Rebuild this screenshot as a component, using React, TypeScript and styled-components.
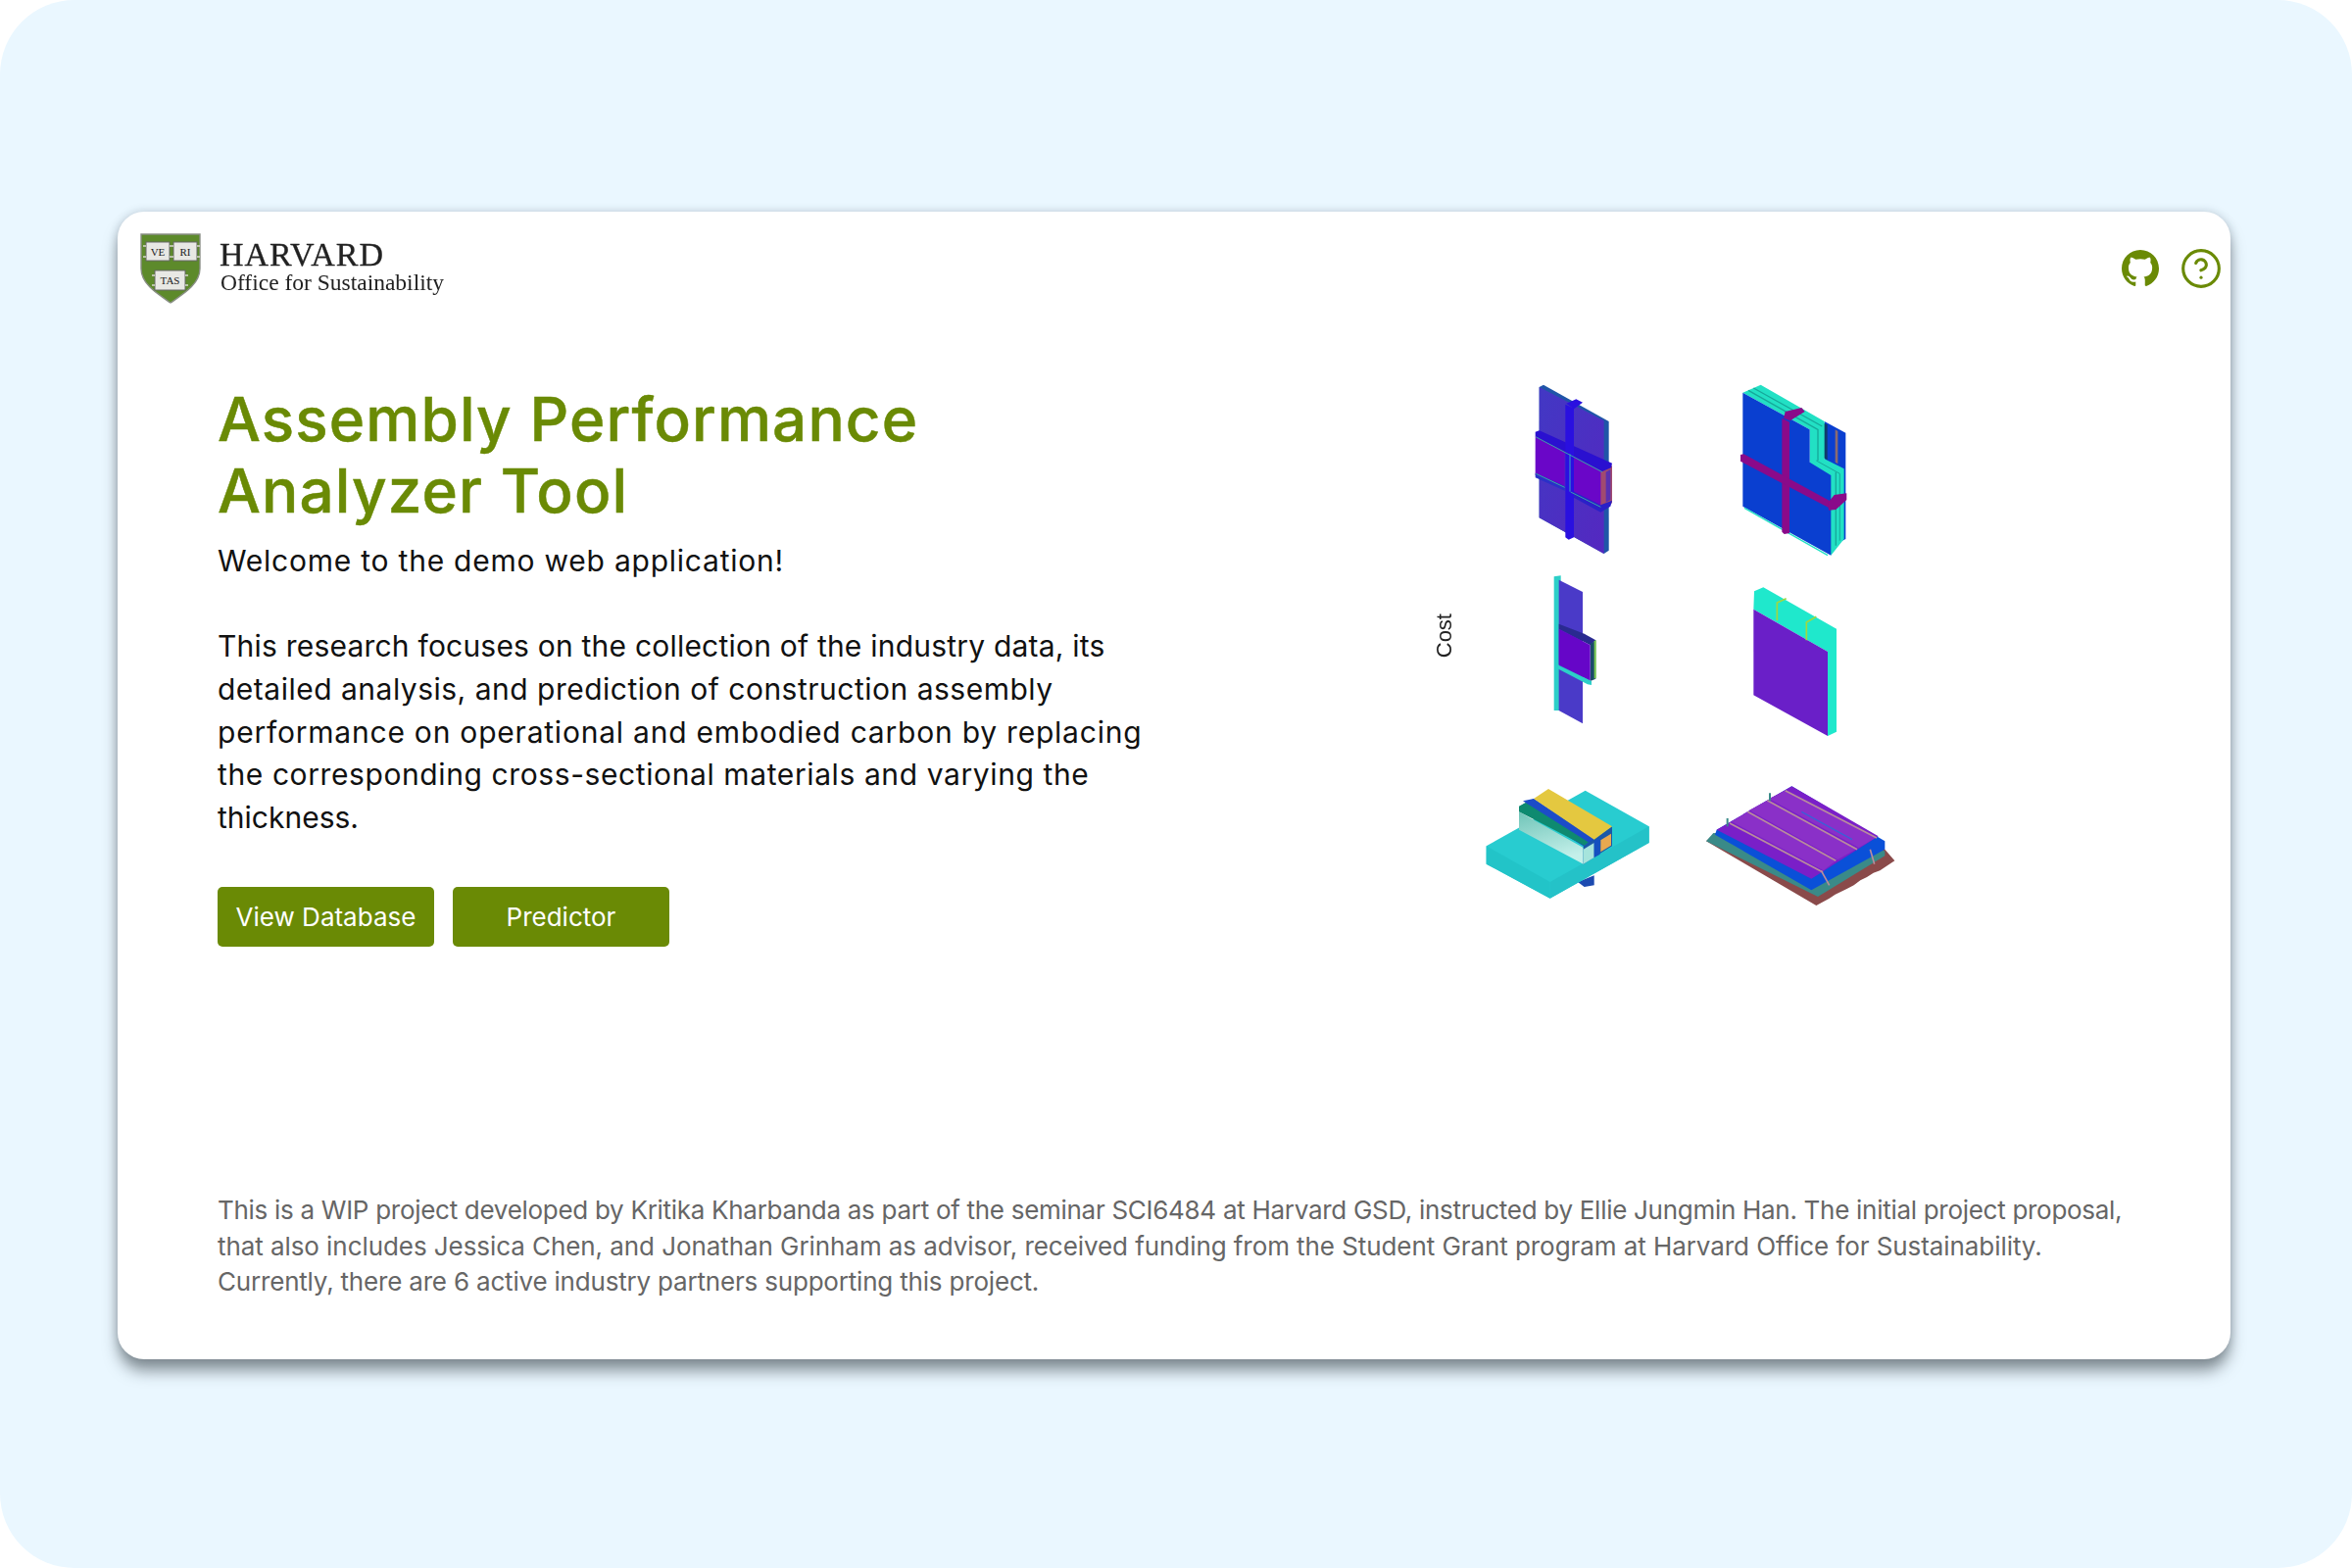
import React from "react";
import styled, { createGlobalStyle } from "styled-components";
import { BsGithub } from "react-icons/bs";
import { CircleHelp } from "lucide-react";

const Global = createGlobalStyle`
  html, body { margin: 0; padding: 0; background: #fff; }
  body { font-family: Inter, "Noto Sans", sans-serif; }
`;

const Page = styled.div`
  width: 2400px; height: 1600px; box-sizing: border-box;
  background: #eaf7ff; border-radius: 76px;
  padding: 216px 124px 213px 120px;
  display: flex;
`;
const Card = styled.main`
  flex: 1; background: #fff; border-radius: 27px;
  box-shadow: 0 13px 15px -1px rgba(40, 50, 55, 0.5), 0 0 10px rgba(40, 60, 75, 0.22);
  display: flex; flex-direction: column;
`;
const Header = styled.header`
  display: flex; justify-content: space-between; align-items: center;
  padding: 22px 8px 0 23px;
`;
const Brand = styled.div`
  display: flex; align-items: center; gap: 19px;
`;
const BrandText = styled.div`
  font-family: "Liberation Serif", serif; color: #222; display: flex; flex-direction: column;
  filter: blur(0.3px); padding-bottom: 2px;
`;
const BrandName = styled.span`
  font-size: 34px; line-height: 30px; letter-spacing: 1px; -webkit-text-stroke: 0.3px #222;
`;
const BrandSub = styled.span`
  font-size: 23.5px; line-height: 27px; padding-left: 1px;
`;
const IconRow = styled.div`
  display: flex; gap: 21px; align-items: center; color: #6a8a05;
`;
const Main = styled.section`
  display: grid; grid-template-columns: 1228px 1fr;
  padding-left: 102px; margin-top: 60px;
`;
const Intro = styled.div`
  padding-top: 21px; display: flex; flex-direction: column; align-items: flex-start;
`;
const Title = styled.h1`
  margin: 0; font-size: 62px; line-height: 73px; font-weight: 500; color: #6a8a05; letter-spacing: 1.1px;
  -webkit-text-stroke: 0.5px #6a8a05;
`;
const Welcome = styled.p`
  margin: 13px 0 0; font-size: 30px; line-height: 44px; color: #111; letter-spacing: 0.77px;
`;
const Body = styled.div`
  margin: 44px 0 0; font-size: 30px; line-height: 43.8px; color: #111;
`;
const Line = styled.span<{ $track: number }>`
  display: block; white-space: nowrap; letter-spacing: ${(p) => p.$track}px;
`;
const Actions = styled.div`
  display: flex; gap: 19px; margin-top: 48px;
`;
const Action = styled.button`
  width: 221px; height: 61px; border: 0; border-radius: 5px; background: #6a8a05;
  color: #fff; font: 400 26px Inter, sans-serif; padding: 0;
`;
const Figure = styled.figure`
  margin: 0; display: flex; align-items: flex-start;
`;
const CostLabel = styled.span`
  font: 400 22px "Liberation Sans", Arial, sans-serif; color: #222;
  writing-mode: vertical-rl; transform: rotate(180deg);
  width: 26px; margin: 256px 13px 0 11px; display: block; text-align: center;
`;
const Art = styled.svg`
  display: block; filter: blur(0.6px);
`;
const Footnote = styled.div`
  margin: auto 0 0; padding: 0 40px 60px 102px; font-size: 26px; line-height: 36.7px; color: #666;
`;

const Shield = () => (
  <svg width="62" height="72" viewBox="0 0 62 72" aria-hidden="true">
    <path d="M1 1H61V36C61 52 44 62 31 71C18 62 1 52 1 36Z" fill="#5d8a2b" stroke="#8a8f86" strokeWidth="1.4" />
    <g fill="#e8e8e4" stroke="#666" strokeWidth="1">
      <rect x="6" y="9" width="24" height="19" />
      <rect x="34" y="9" width="24" height="19" />
      <rect x="15" y="38" width="31" height="20" />
    </g>
    <g fill="none" stroke="#d8d8d0" strokeWidth="1.6">
      <path d="M3 13h3M3 24h3M30 13h4M30 24h4M58 13h3M58 24h3M12 43h3M12 53h3M46 43h3M46 53h3" />
    </g>
    <g fontFamily="Liberation Serif, serif" fontSize="11" fill="#222" textAnchor="middle">
      <text x="18" y="22.5">VE</text>
      <text x="46" y="22.5">RI</text>
      <text x="30.5" y="52">TAS</text>
    </g>
  </svg>
);

const Assemblies = () => (
  <Art width="450" height="600" viewBox="150 0 1350 1800" aria-hidden="true">
    <defs>
      <linearGradient id="wallA" x1="0" y1="0" x2="1" y2="1">
        <stop offset="0" stopColor="#4238c4" />
        <stop offset="1" stopColor="#5428c0" />
      </linearGradient>
      <linearGradient id="boxFace" x1="0" y1="0" x2="0.3" y2="1">
        <stop offset="0" stopColor="#6fc4b8" />
        <stop offset="1" stopColor="#c4f0ea" />
      </linearGradient>
    </defs>

    {/* curtain wall, top left */}
    <polygon points="375,68 575,180 575,575 560,585 362,475 362,75" fill="#1f55a8" />
    <polygon points="362,75 560,178 560,585 362,475" fill="url(#wallA)" />
    <polygon points="350,225 440,270 440,385 350,345" fill="#6a06c8" />
    <polygon points="458,282 555,332 555,445 458,395" fill="#6a06c8" />
    <polygon points="550,335 585,315 585,430 550,450" fill="#a04a70" />
    <polygon points="566,335 580,327 580,420 566,428" fill="#5a30b0" />
    <polygon points="350,212 362,208 585,308 582,322 555,333 350,226" fill="#2a10d0" />
    <polygon points="350,338 440,378 440,392 350,352" fill="#2a30c8" />
    <polygon points="458,390 550,436 585,422 580,440 550,458 458,408" fill="#2a20c8" />
    <polygon points="442,128 468,140 468,535 452,542 442,535" fill="#2a10e0" />
    <polygon points="445,125 475,112 495,122 468,142" fill="#2a10e0" />
    <polyline points="352,228 555,335" fill="none" stroke="#3aa0a8" strokeWidth="3" />
    <polyline points="352,340 440,382" fill="none" stroke="#3aa0a8" strokeWidth="3" />
    <polyline points="458,396 550,442" fill="none" stroke="#3aa0a8" strokeWidth="3" />
    <line x1="456" y1="280" x2="456" y2="395" stroke="#3aa0c8" strokeWidth="3" />

    {/* stepped wall, top right */}
    <polygon points="1235,180 1300,215 1300,540 1270,555 1270,330 1235,295" fill="#0a3fd0" />
    <polygon points="1232,185 1244,190 1244,298 1232,292" fill="#0f3a6a" />
    <polygon points="1268,205 1276,210 1276,310 1268,305" fill="#8a6a70" />
    <polygon points="985,92 1040,68 1235,180 1235,295 1295,325 1295,540 1255,590 1190,305 1190,205" fill="#22e0c4" />
    <polyline points="1002,85 1215,205 1215,300" fill="none" stroke="#16a89a" strokeWidth="4" />
    <polyline points="1018,78 1228,195" fill="none" stroke="#16a89a" strokeWidth="4" />
    <polyline points="1270,335 1270,560" fill="none" stroke="#16a89a" strokeWidth="4" />
    <polyline points="1210,300 1282,340 1282,545" fill="none" stroke="#16a89a" strokeWidth="3" />
    <polygon points="985,92 1190,205 1190,305 1255,345 1255,590 985,440" fill="#0a3fd0" />
    <polyline points="990,445 1245,590" fill="none" stroke="#22e0c4" strokeWidth="4" />
    <polygon points="1105,170 1128,182 1128,522 1112,525 1105,518" fill="#8a0a8a" />
    <polygon points="1115,150 1165,138 1175,150 1130,178 1110,170" fill="#8a0a8a" />
    <polygon points="978,282 988,280 1255,425 1255,448 978,302" fill="#8a0a8a" />
    <polygon points="1245,430 1265,405 1303,400 1303,420 1270,450 1248,452" fill="#8a0a8a" />

    {/* narrow mullion, middle left */}
    <polygon points="407,655 428,652 430,1065 407,1065" fill="#2ccfc8" />
    <polygon points="422,665 495,702 495,1105 422,1065" fill="#4a3ac8" />
    <polygon points="422,800 500,830 535,850 518,865 422,815" fill="#2a2a90" />
    <polygon points="518,862 535,850 535,968 518,975" fill="#1a4a6a" />
    <polygon points="530,852 536,850 536,965 530,968" fill="#7acb50" />
    <polygon points="422,815 518,865 518,975 422,925" fill="#6606c8" />
    <polygon points="418,925 522,975 522,987 510,985 418,937" fill="#2ccfc8" />

    {/* insulated panel, middle right */}
    <polygon points="1020,700 1048,688 1272,815 1272,1130 1245,1143 1245,885 1018,755" fill="#1fe8cc" />
    <polygon points="1018,755 1245,885 1245,1143 1018,1018" fill="#6a1fc8" />
    <polyline points="1118,722 1090,735 1090,790" fill="none" stroke="#a0d840" strokeWidth="5" />
    <polyline points="1210,778 1180,795 1180,850" fill="none" stroke="#a0d840" strokeWidth="5" />

    {/* parapet on slab, bottom left */}
    <polygon points="480,1590 530,1570 530,1600 500,1605" fill="#1c4ab0" />
    <polygon points="200,1480 503,1310 698,1420 698,1470 395,1640 200,1535" fill="#28ccd0" />
    <polygon points="200,1480 395,1590 395,1640 200,1535" fill="#22c4c8" />
    <polygon points="395,1590 698,1420 698,1470 395,1640" fill="#24c2c8" />
    <polygon points="300,1375 497,1485 497,1535 300,1430" fill="url(#boxFace)" />
    <polygon points="497,1480 585,1420 585,1480 497,1535" fill="#1a58a8" />
    <polygon points="550,1462 582,1442 582,1478 550,1498" fill="#e8a850" />
    <polygon points="497,1490 530,1470 530,1515 497,1535" fill="#a6e4dc" />
    <polygon points="530,1465 548,1455 548,1505 530,1515" fill="#1450c0" />
    <polygon points="300,1360 345,1335 530,1460 497,1480" fill="#1450c0" />
    <polygon points="300,1358 320,1347 525,1458 500,1478 300,1375" fill="#0e8a70" />
    <polygon points="312,1342 345,1335 530,1458 512,1468" fill="#1c4cc8" />
    <polygon points="345,1335 390,1305 585,1420 530,1460" fill="#e4c840" />

    {/* standing-seam roof, bottom right */}
    <path d="M873 1465 L1210 1662 L1250 1640 L1268 1628 L1285 1620 L1305 1610 L1325 1600 L1345 1585 L1365 1575 L1385 1562 L1405 1555 L1450 1525 L1420 1490 L900 1440Z" fill="#8a4a4a" />
    <polygon points="873,1465 895,1440 1420,1495 1420,1510 1215,1635" fill="#3a8a88" />
    <polygon points="905,1430 1135,1297 1420,1465 1420,1490 1195,1615 900,1445" fill="#0a50d8" />
    <polygon points="905,1430 1135,1297 1400,1450 1195,1580" fill="#7a1fc8" />
    <polygon points="950,1405 1000,1375 1270,1525 1232,1555" fill="#8a30c8" />
    <polygon points="1005,1370 1060,1340 1335,1488 1275,1522" fill="#8a30c8" />
    <polygon points="1065,1335 1115,1310 1395,1453 1340,1485" fill="#8a30c8" />
    <g stroke="#b98c9c" strokeWidth="5">
      <line x1="945" y1="1410" x2="1230" y2="1560" />
      <line x1="1000" y1="1375" x2="1270" y2="1525" />
      <line x1="1060" y1="1340" x2="1335" y2="1490" />
      <line x1="1115" y1="1310" x2="1395" y2="1455" />
    </g>
    <g stroke="#3a8a88" strokeWidth="6">
      <line x1="938" y1="1395" x2="938" y2="1420" />
      <line x1="1068" y1="1318" x2="1068" y2="1342" />
    </g>
    <g stroke="#b98c9c" strokeWidth="5">
      <line x1="1225" y1="1555" x2="1250" y2="1600" />
      <line x1="1375" y1="1490" x2="1388" y2="1535" />
    </g>
    <line x1="1165" y1="1375" x2="1320" y2="1460" stroke="#3a60d8" strokeWidth="4" />
  </Art>
);

const bodyLines: [string, number][] = [
  ["This research focuses on the collection of the industry data, its", 0.21],
  ["detailed analysis, and prediction of construction assembly", 0.5],
  ["performance on operational and embodied carbon by replacing", 0.78],
  ["the corresponding cross-sectional materials and varying the", 0.6],
  ["thickness.", 0],
];

const noteLines: [string, number][] = [
  ["This is a WIP project developed by Kritika Kharbanda as part of the seminar SCI6484 at Harvard GSD, instructed by Ellie Jungmin Han. The initial project proposal,", -0.29],
  ["that also includes Jessica Chen, and Jonathan Grinham as advisor, received funding from the Student Grant program at Harvard Office for Sustainability.", -0.07],
  ["Currently, there are 6 active industry partners supporting this project.", -0.19],
];

export default function App() {
  return (
    <Page>
      <Global />
      <Card>
        <Header>
          <Brand>
            <Shield />
            <BrandText>
              <BrandName>HARVARD</BrandName>
              <BrandSub>Office for Sustainability</BrandSub>
            </BrandText>
          </Brand>
          <IconRow>
            <BsGithub size={38} />
            <CircleHelp size={44} strokeWidth={1.7} />
          </IconRow>
        </Header>
        <Main>
          <Intro>
            <Title>
              Assembly Performance
              <br />
              Analyzer Tool
            </Title>
            <Welcome>Welcome to the demo web application!</Welcome>
            <Body>
              {bodyLines.map(([text, track]) => (
                <Line key={text} $track={track}>{text}</Line>
              ))}
            </Body>
            <Actions>
              <Action>View Database</Action>
              <Action>Predictor</Action>
            </Actions>
          </Intro>
          <Figure>
            <CostLabel>Cost</CostLabel>
            <Assemblies />
          </Figure>
        </Main>
        <Footnote>
          {noteLines.map(([text, track]) => (
            <Line key={text} $track={track}>{text}</Line>
          ))}
        </Footnote>
      </Card>
    </Page>
  );
}
